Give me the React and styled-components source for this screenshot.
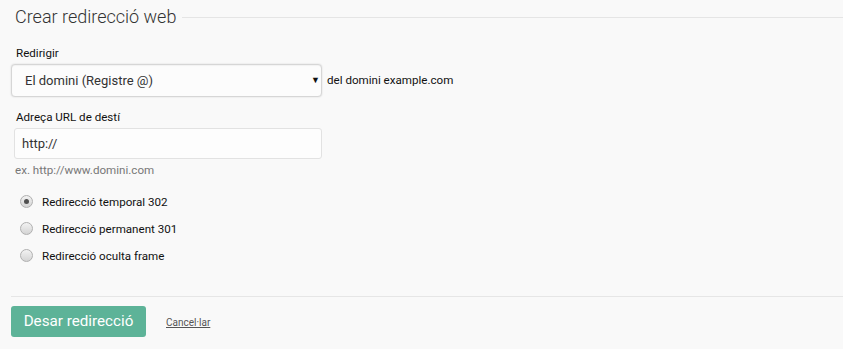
import styled, { createGlobalStyle } from 'styled-components';

const GlobalStyle = createGlobalStyle`
  body {
    margin: 0;
    background: #ffffff;
    font-family: Roboto, "Liberation Sans", Arial, sans-serif;
    color: #333333;
  }
`;

const Form = styled.form`
  background: #f9f9f9;
  height: 349px;
  padding-left: 11px;
  box-sizing: border-box;
  display: flex;
  flex-direction: column;
`;

const Legend = styled.div`
  display: flex;
  align-items: center;
  gap: 6px;
  padding: 5px 0 0 4px;
`;

const LegendText = styled.h2`
  margin: 0;
  font-size: 18px;
  font-weight: 300;
  line-height: 24px;
  color: #333333;
  white-space: nowrap;
`;

const LegendRule = styled.div`
  flex: 1;
  border-top: 1px solid #e5e5e5;
`;

const Label = styled.label`
  display: block;
  margin: ${(p) => p.$top}px 0 3px 5px;
  font-size: 11.6px;
  font-weight: 400;
  line-height: 16px;
  color: #111111;
`;

const Row = styled.div`
  display: flex;
  align-items: center;
  gap: 5px;
`;

const SelectBox = styled.div`
  width: 311px;
  height: 33px;
  box-sizing: border-box;
  display: flex;
  align-items: center;
  justify-content: space-between;
  padding: 0 1px 1px 13px;
  background: #fcfcfc;
  border: 1px solid #d6d6d6;
  border-radius: 4px;
  box-shadow: 0 0 2px rgba(0, 0, 0, 0.14), inset 0 1px 1px rgba(0, 0, 0, 0.04);
  font-size: 13px;
  color: #333333;
`;

const Arrow = styled.span`
  font-size: 9px;
  color: #111111;
`;

const SideText = styled.span`
  font-size: 11.6px;
  color: #111111;
  margin-top: -2px;
`;

const Input = styled.input`
  margin-left: 3px;
  width: 308px;
  height: 31px;
  box-sizing: border-box;
  padding: 0 7px;
  background: #fdfdfd;
  border: 1px solid #e2e2e2;
  border-radius: 3px;
  font-family: inherit;
  font-size: 13px;
  color: #333333;
  outline: none;
`;

const Hint = styled.div`
  margin: 3px 0 0 4px;
  font-size: 11.6px;
  line-height: 16px;
  color: #777777;
`;

const Options = styled.div`
  margin-top: 10px;
  display: flex;
  flex-direction: column;
`;

const Option = styled.label`
  height: 27px;
  display: flex;
  align-items: center;
  gap: 9px;
  padding-left: 9px;
  font-size: 11.6px;
  color: #111111;
`;

const Radio = styled.span`
  width: 13px;
  height: 13px;
  box-sizing: border-box;
  border-radius: 50%;
  border: 1px solid #b0b0b0;
  background: linear-gradient(#f2f2f2, #d4d4d4);
  display: flex;
  align-items: center;
  justify-content: center;

  &::after {
    content: '';
    width: 5px;
    height: 5px;
    border-radius: 50%;
    background: ${(p) => (p.$checked ? '#505050' : 'transparent')};
  }
`;

const Separator = styled.div`
  margin-top: 27px;
  border-top: 1px solid #e6e6e6;
`;

const Actions = styled.div`
  margin-top: 9px;
  display: flex;
  align-items: center;
  gap: 20px;
`;

const SaveButton = styled.button`
  width: 135px;
  height: 31px;
  border: none;
  border-radius: 3px;
  background: #5db398;
  color: #ffffff;
  font-family: inherit;
  font-size: 15.2px;
  padding: 0 0 2px;
  cursor: pointer;
`;

const CancelLink = styled.a`
  font-size: 10px;
  color: #555555;
  text-decoration: underline;
  margin-top: 1px;
`;

const options = [
  { label: 'Redirecció temporal 302', checked: true },
  { label: 'Redirecció permanent 301', checked: false },
  { label: 'Redirecció oculta frame', checked: false },
];

export default function App() {
  return (
    <>
      <GlobalStyle />
      <Form onSubmit={(e) => e.preventDefault()}>
        <Legend>
          <LegendText>Crear redirecció web</LegendText>
          <LegendRule />
        </Legend>

        <Label $top={16}>Redirigir</Label>
        <Row>
          <SelectBox>
            <span>El domini (Registre @)</span>
            <Arrow>▼</Arrow>
          </SelectBox>
          <SideText>del domini example.com</SideText>
        </Row>

        <Label $top={12}>Adreça URL de destí</Label>
        <Input defaultValue="http://" />
        <Hint>ex. http://www.domini.com</Hint>

        <Options>
          {options.map((o) => (
            <Option key={o.label}>
              <Radio $checked={o.checked} />
              {o.label}
            </Option>
          ))}
        </Options>

        <Separator />
        <Actions>
          <SaveButton type="submit">Desar redirecció</SaveButton>
          <CancelLink href="#">Cancel·lar</CancelLink>
        </Actions>
      </Form>
    </>
  );
}
